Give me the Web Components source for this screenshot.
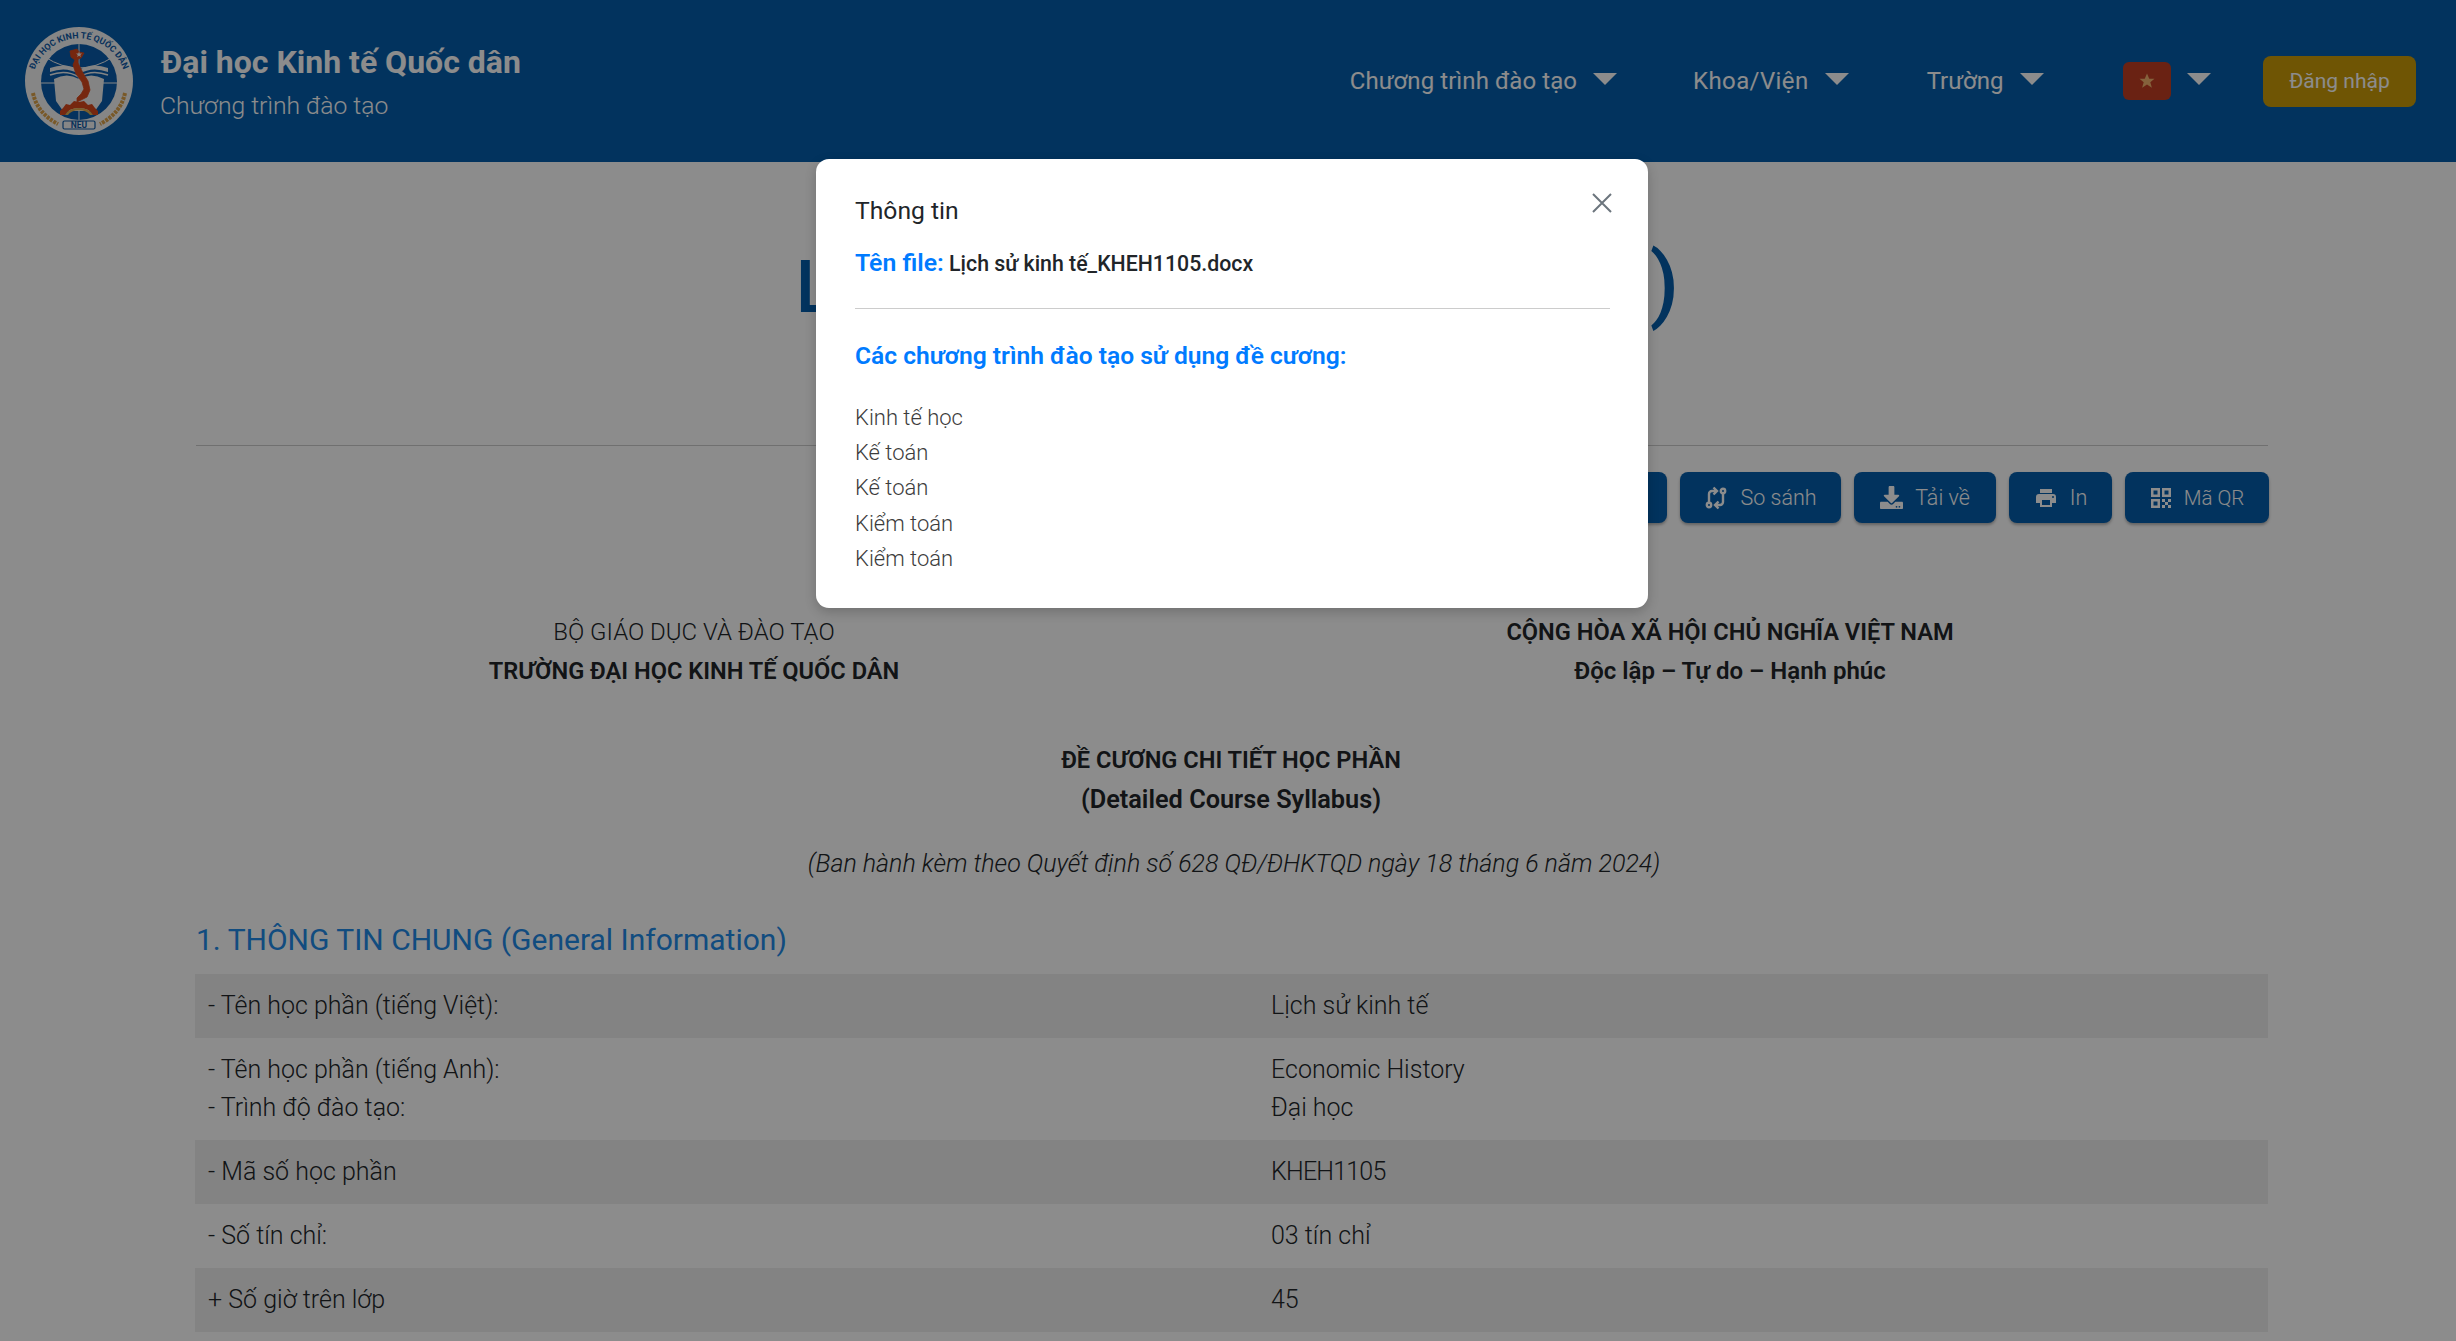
<!DOCTYPE html>
<html lang="vi">
<head>
<meta charset="utf-8">
<title>Đề cương chi tiết học phần</title>
<style>
    html, body { margin: 0; height: 1341px; overflow: hidden; background: #fff; }
    body { font-family: Roboto, "Liberation Sans", sans-serif; color: #212529; position: relative; }
</style>
</head>
<body>
<site-header></site-header>
<page-title></page-title>
<doc-toolbar></doc-toolbar>
<doc-intro></doc-intro>
<info-table></info-table>
<modal-overlay>
    <info-modal></info-modal>
</modal-overlay>

<script>
class siteLogo extends HTMLElement
{
    constructor()
    {
        super();
        this.attachShadow({mode:"open"}).innerHTML =
        `
        <style>
            :host { display: block; width: 108px; height: 108px; }
            svg { display: block; }
            text { font-family: Roboto, sans-serif; font-weight: 700; }
        </style>
        <svg width="108" height="108" viewBox="0 0 108 108">
            <defs>
                <path id="ring" d="M9 72 A47 47 0 1 1 99 72"/>
            </defs>
            <circle cx="54" cy="54" r="54" fill="#f4f4f4"/>
            <circle cx="54" cy="55" r="38" fill="#0a5cab"/>
            <text font-size="8.800" fill="#0f5aa6"><textPath href="#ring" startOffset="50%" text-anchor="middle">ĐẠI HỌC KINH TẾ QUỐC DÂN</textPath></text>
            <path d="M20 30 Q54 52 88 30" fill="none" stroke="#f4f4f4" stroke-width="1"/>
            <path d="M16 56 H92 M54 17 V93" stroke="#f4f4f4" stroke-width="1"/>
            <path d="M29 52 Q42 45 54 52 Q66 45 79 52 L77 74 L70 84 H38 L31 74Z" fill="#f0f0f0"/>
            <path d="M25 41 Q41 35 54 43 Q67 35 83 41 V45 Q67 39 54 47 Q41 39 25 45Z" fill="#f0f0f0"/>
            <path d="M25 48 Q41 42 54 50 Q67 42 83 48" fill="none" stroke="#f0f0f0" stroke-width="1.500"/>
            <path d="M45 24 L52 22 L54 25 L59 26 L56 31 L53 32 L53 36 L58 46 L63 54 L65 63 L62 70 L56 73 L52 75 L52 71 L56 67 L59 62 L57 55 L51 47 L48 38 L50 33 L46 30Z" fill="#d8471c" stroke="#d8471c" stroke-width=".8"/>
            <path d="M54 24.500 l.8 2 2.200 .1 -1.700 1.300 .6 2.100 -1.900 -1.200 -1.800 1.200 .6 -2.100 -1.700 -1.300 2.200 -.1Z" fill="#f4f4f4"/>
            <path d="M35 88 V84 L38 81 L41 77 L45 78 L49 74 L54 75 L59 74 L63 78 L67 77 L70 81 L73 84 V88 L68 88 A15 11 0 0 0 40 88Z" fill="#d8471c"/>
            <path d="M40 88 A15 11 0 0 1 68 88 L65 88 A12 8 0 0 0 43 88Z" fill="#e0ab4e"/>
            <path d="M8 66 Q12 86 33 97" fill="none" stroke="#dca24a" stroke-width="4" stroke-dasharray="3 1"/>
            <path d="M100 66 Q96 86 75 97" fill="none" stroke="#dca24a" stroke-width="4" stroke-dasharray="3 1"/>
            <rect x="38" y="94" width="32" height="8" rx="1.500" fill="#f4f4f4" stroke="#0f5aa6" stroke-width="1.200"/>
            <text x="54" y="101" font-size="8.500" text-anchor="middle" fill="#0f5aa6">NEU</text>
        </svg>
        `;
    }
}

class navItem extends HTMLElement
{
    constructor()
    {
        super();
        this.attachShadow({mode:"open"}).innerHTML =
        `
        <style>
            :host { display: flex; align-items: center; gap: 16px; font-size: 24px; color: #fff; }
            .caret { width: 0; height: 0; border-left: 12px solid transparent; border-right: 12px solid transparent; border-top: 12px solid #fff; margin-top: -4px; }
        </style>
        <slot></slot><span class="caret"></span>
        `;
    }
}

class siteHeader extends HTMLElement
{
    constructor()
    {
        super();
        this.attachShadow({mode:"open"}).innerHTML =
        `
        <style>
            :host { display: flex; align-items: center; height: 162px; background: #055eac; box-sizing: border-box; padding: 0 40px 0 25px; color: #fff; }
            .brand { display: flex; flex-direction: column; margin-left: 28px; margin-top: 4px; }
            .brand b { font-size: 32px; font-weight: 700; line-height: 40px; padding-top: 2px; }
            .brand span { font-size: 24.700px; line-height: 40px; margin-top: 4px; margin-left: -1px; font-weight: 300; }
            nav { margin-left: auto; display: flex; align-items: center; gap: 78px; }
            .flag { width: 48px; height: 38px; border-radius: 6px; background: #c13f24; display: flex; align-items: center; justify-content: center; }
            .login { display: flex; align-items: center; justify-content: center; width: 153px; height: 51px; border-radius: 8px; background: #ca9c09; font-size: 21px; margin-left: -26px; }
            .item-wide { margin-right: -2px; letter-spacing: .06px; }
            .khoa { letter-spacing: .4px; }
            .lang { margin-left: 1.500px; }
        </style>
        <site-logo></site-logo>
        <div class="brand">
            <b>Đại học Kinh tế Quốc dân</b>
            <span>Chương trình đào tạo</span>
        </div>
        <nav>
            <nav-item class="item-wide">Chương trình đào tạo</nav-item>
            <nav-item class="khoa">Khoa/Viện</nav-item>
            <nav-item>Trường</nav-item>
            <nav-item class="lang">
                <span class="flag">
                    <svg width="18" height="18" viewBox="0 0 24 24"><path d="M12 2l3 7h7l-5.600 4.500 2.100 7.500-6.500-4.400-6.500 4.400 2.100-7.500L2 9h7z" fill="#f2b26e"/></svg>
                </span>
            </nav-item>
            <span class="login">Đăng nhập</span>
        </nav>
        `;
    }
}

class pageTitle extends HTMLElement
{
    constructor()
    {
        super();
        this.attachShadow({mode:"open"}).innerHTML =
        `
        <style>
            :host { display: block; margin: 0 188px 0 196px; height: 284px; border-bottom: 1px solid #ccc; box-sizing: border-box; text-align: center; }
            h1 { margin: 0; padding: 86px 0 0 10px; font-size: 72px; line-height: 80px; font-weight: 500; letter-spacing: -1px; color: #055eac; white-space: nowrap; }
            h1 span { font-size: 84px; line-height: 0; margin-left: 16px; }
        </style>
        <h1>Lịch sử kinh tế (KHEH1105<span>)</span></h1>
        `;
    }
}

class actionButton extends HTMLElement
{
    constructor()
    {
        super();
        this.attachShadow({mode:"open"}).innerHTML =
        `
        <style>
            :host { display: inline-flex; align-items: center; justify-content: center; gap: 12px; height: 51px; box-sizing: border-box; padding: 0 24px; border-radius: 8px; background: #055eac; color: #fff; font-size: 21.500px; font-weight: 300; box-shadow: 0 2px 3px rgba(0,0,0,.3); }
            ::slotted(svg) { display: block; fill: #fff; }
        </style>
        <slot></slot>
        `;
    }
}

class docToolbar extends HTMLElement
{
    constructor()
    {
        super();
        this.attachShadow({mode:"open"}).innerHTML =
        `
        <style>
            :host { display: flex; justify-content: flex-end; gap: 13px; margin: 26px 187px 0 196px; height: 51px; }
        </style>
        <action-button>Xem trước</action-button>
        <action-button style="width:161px;padding:0">
            <svg width="24" height="24" viewBox="0 0 24 24" style="fill:none;stroke:#fff;stroke-width:2.400">
                <circle cx="5" cy="19" r="2.200"/><circle cx="19" cy="5" r="2.200"/>
                <path d="M5 16.500V8a3 3 0 0 1 3-3h4M9.500 1.500L13 5l-3.500 3.500M19 7.500V16a3 3 0 0 1-3 3h-4M14.500 15.500L11 19l3.500 3.500"/>
            </svg>So sánh
        </action-button>
        <action-button style="width:142px;padding:0">
            <svg width="23" height="23" viewBox="0 0 512 512"><path d="M216 0h80c13.300 0 24 10.700 24 24v168h87.700c17.800 0 26.700 21.500 14.100 34.100L269.700 378.300c-7.500 7.500-19.800 7.500-27.300 0L90.100 226.100c-12.600-12.600-3.700-34.100 14.100-34.100H192V24c0-13.300 10.700-24 24-24zm296 376v112c0 13.300-10.700 24-24 24H24c-13.300 0-24-10.700-24-24V376c0-13.300 10.700-24 24-24h146.700l49 49c20.100 20.100 52.500 20.100 72.600 0l49-49H488c13.300 0 24 10.700 24 24zm-124 88c0-11-9-20-20-20s-20 9-20 20 9 20 20 20 20-9 20-20zm64 0c0-11-9-20-20-20s-20 9-20 20 9 20 20 20 20-9 20-20z"/></svg>Tải về
        </action-button>
        <action-button style="width:103px;padding:0">
            <svg width="24" height="24" viewBox="0 0 24 24"><path d="M18 3H6v4h12zM19 12a1 1 0 1 1 0-2 1 1 0 0 1 0 2zM16 19H8v-5h8zM19 8H5a3 3 0 0 0-3 3v6h4v4h12v-4h4v-6a3 3 0 0 0-3-3z"/></svg>In
        </action-button>
        <action-button style="width:144px;padding:0">
            <svg width="22" height="22" viewBox="0 0 22 22">
                <path fill-rule="evenodd" d="M1 1h9v9H1zM3.500 3.500v4h4v-4zM12 1h9v9h-9zM14.500 3.500v4h4v-4zM1 12h9v9H1zM3.500 14.500v4h4v-4z"/>
                <path d="M12 12h3v3h-3zM18 12h3v3h-3zM15 15h3v3h-3zM12 18h3v3h-3zM18 18h3v3h-3z"/>
            </svg><span style="font-size:20.500px">Mã QR</span>
        </action-button>
        `;
    }
}

class docIntro extends HTMLElement
{
    constructor()
    {
        super();
        this.attachShadow({mode:"open"}).innerHTML =
        `
        <style>
            :host { display: block; margin: 90px 188px 0 196px; font-size: 24px; line-height: 39px; color: #212529; text-align: center; }
            .cols { display: grid; grid-template-columns: 996px 1076px; }
            .cols b, .center b { display: block; font-weight: 600; }
            .narrow { font-size: 23.600px; }
            .wide { font-size: 25.300px; }
            .light { font-weight: 300; }
            .center { margin: 50px 0 0 0; padding-right: 2px; }
            .decree { margin-top: 25px; font-size: 25px; font-style: italic; font-weight: 300; padding-left: 4px; }
            h2 { margin: 37px 0 0 0; font-size: 30px; line-height: 40px; font-weight: 400; text-align: left; color: #1f8ae8; }
        </style>
        <div class="cols">
            <div>
                <div class="light">BỘ GIÁO DỤC VÀ ĐÀO TẠO</div>
                <b class="narrow">TRƯỜNG ĐẠI HỌC KINH TẾ QUỐC DÂN</b>
            </div>
            <div>
                <b class="narrow">CỘNG HÒA XÃ HỘI CHỦ NGHĨA VIỆT NAM</b>
                <b>Độc lập – Tự do – Hạnh phúc</b>
            </div>
        </div>
        <div class="center">
            <b class="narrow">ĐỀ CƯƠNG CHI TIẾT HỌC PHẦN</b>
            <b class="wide">(Detailed Course Syllabus)</b>
        </div>
        <div class="decree">(Ban hành kèm theo Quyết định số 628 QĐ/ĐHKTQD ngày 18 tháng 6 năm 2024)</div>
        <h2>1. THÔNG TIN CHUNG (General Information)</h2>
        `;
    }
}

class infoTable extends HTMLElement
{
    constructor()
    {
        super();
        const rows = [
            [["- Tên học phần (tiếng Việt):", "Lịch sử kinh tế"]],
            [["- Tên học phần (tiếng Anh):", "Economic History"], ["- Trình độ đào tạo:", "Đại học"]],
            [["- Mã số học phần", "<span class='code'>KHEH1105</span>"]],
            [["- Số tín chỉ:", "03 tín chỉ"]],
            [["+ Số giờ trên lớp", "45"]]
        ];
        const html = rows.map(group =>
            `<div class="row">` + group.map(r => `<span>${r[0]}</span><span>${r[1]}</span>`).join("") + `</div>`
        ).join("");
        this.attachShadow({mode:"open"}).innerHTML =
        `
        <style>
            :host { display: block; margin: 14px 188px 0 195px; font-size: 25px; line-height: 38px; font-weight: 300; color: #212529; }
            .row { display: grid; grid-template-columns: 1063px 1fr; padding: 13px 13px; }
            .row:nth-child(even) { background: rgba(0,0,0,.065); }
            .code { letter-spacing: -.8px; }
        </style>
        ${html}
        `;
    }
}

class modalOverlay extends HTMLElement
{
    constructor()
    {
        super();
        this.attachShadow({mode:"open"}).innerHTML =
        `
        <style>
            :host { position: absolute; inset: 0; display: flex; justify-content: center; align-items: flex-start; box-sizing: border-box; padding: 159px 0 0 8px; background: rgba(0,0,0,.45); }
        </style>
        <slot></slot>
        `;
    }
}

class infoModal extends HTMLElement
{
    constructor()
    {
        super();
        this.attachShadow({mode:"open"}).innerHTML =
        `
        <style>
            :host { display: block; width: 832px; height: 449px; box-sizing: border-box; padding: 0 38px 0 39px; background: #fff; border-radius: 13px; box-shadow: 0 4px 12px rgba(0,0,0,.2); color: #212529; }
            .head { display: flex; justify-content: space-between; padding-top: 36px; }
            .head span { font-size: 24.700px; line-height: 32px; }
            .head svg { display: block; margin: -3px -3px 0 0; }
            .file { margin-top: 20px; height: 57px; line-height: 32px; font-size: 21.300px; font-weight: 500; }
            .file b, h3 { color: #007bff; font-size: 24.800px; font-weight: 600; }
            hr { border: 0; border-top: 1px solid #ccc; margin: 4px 0 0 0; }
            h3 { margin: 31px 0 0 0; line-height: 32px; font-size: 24.600px; }
            ul { list-style: none; margin: 28px 0 0 0; padding: 0; font-size: 22px; line-height: 35.200px; font-weight: 300; color: #3c3c3c; }
        </style>
        <div class="head">
            <span>Thông tin</span>
            <svg width="22" height="22" viewBox="0 0 22 22" fill="none" stroke="#6c757d" stroke-width="2"><path d="M2 2l18 18M20 2L2 20"/></svg>
        </div>
        <div class="file"><b>Tên file:</b> Lịch sử kinh tế_KHEH1105.docx</div>
        <hr>
        <h3>Các chương trình đào tạo sử dụng đề cương:</h3>
        <ul>
            <li>Kinh tế học</li>
            <li>Kế toán</li>
            <li>Kế toán</li>
            <li>Kiểm toán</li>
            <li>Kiểm toán</li>
        </ul>
        `;
    }
}

customElements.define('site-logo', siteLogo);
customElements.define('nav-item', navItem);
customElements.define('site-header', siteHeader);
customElements.define('page-title', pageTitle);
customElements.define('action-button', actionButton);
customElements.define('doc-toolbar', docToolbar);
customElements.define('doc-intro', docIntro);
customElements.define('info-table', infoTable);
customElements.define('modal-overlay', modalOverlay);
customElements.define('info-modal', infoModal);
</script>
</body>
</html>
